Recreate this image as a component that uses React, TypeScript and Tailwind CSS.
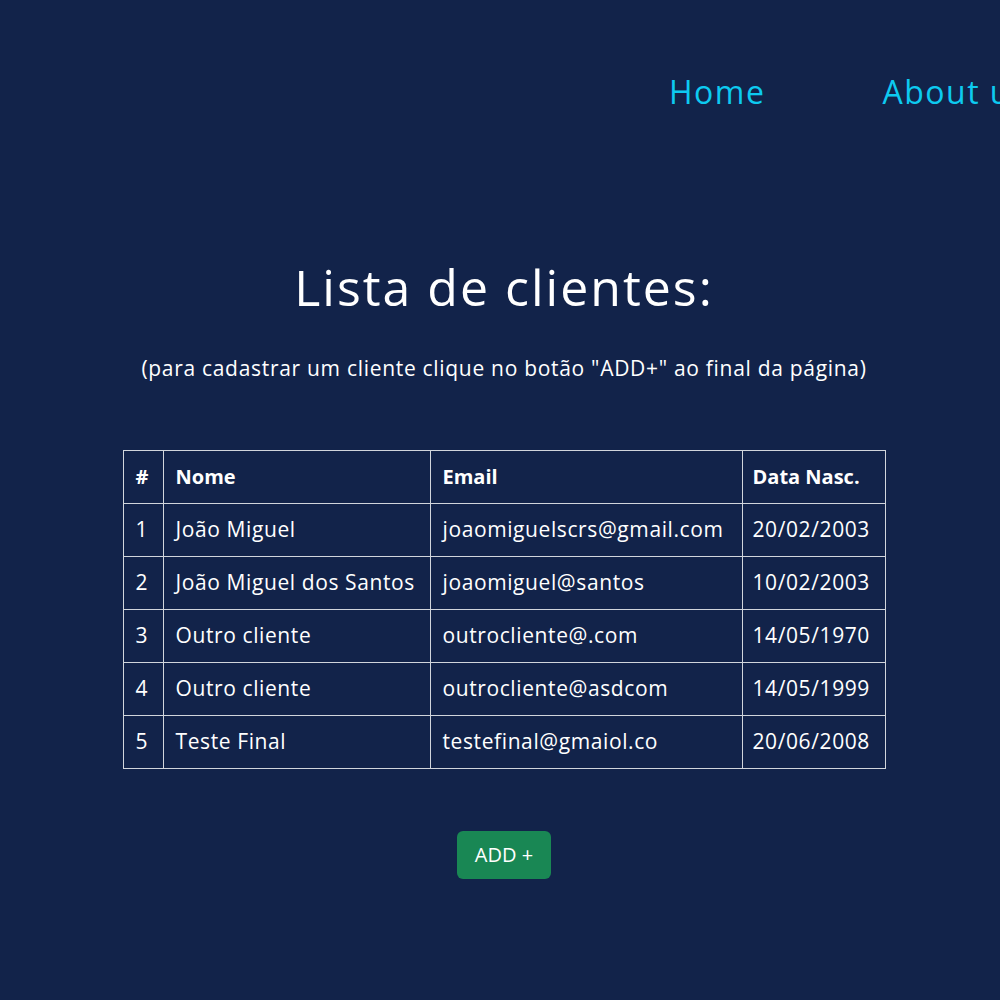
import React from "react";

type Cliente = {
  id: number;
  nome: string;
  email: string;
  nasc: string;
};

const clientes: Cliente[] = [
  { id: 1, nome: "João Miguel", email: "joaomiguelscrs@gmail.com", nasc: "20/02/2003" },
  { id: 2, nome: "João Miguel dos Santos", email: "joaomiguel@santos", nasc: "10/02/2003" },
  { id: 3, nome: "Outro cliente", email: "outrocliente@.com", nasc: "14/05/1970" },
  { id: 4, nome: "Outro cliente", email: "outrocliente@asdcom", nasc: "14/05/1999" },
  { id: 5, nome: "Teste Final", email: "testefinal@gmaiol.co", nasc: "20/06/2008" },
];

const App: React.FC = () => {
  return (
    <div className="min-h-[1000px] w-full overflow-hidden bg-[#12234a] font-['Open_Sans',sans-serif] text-white">
      {/* Navbar */}
      <nav className="flex gap-[117px] whitespace-nowrap pl-[669px] pt-[68px] text-[32px] leading-[48px] tracking-[1.5px] text-[#0dcaf0]">
        <a href="#">Home</a>
        <a href="#">About us</a>
      </nav>

      <main className="flex flex-col items-center pl-2">
        <h1 className="mt-[142px] text-[50px] leading-[58px] tracking-[2px]">Lista de clientes:</h1>
        <p className="mt-[37px] text-[21px] leading-[30px] tracking-[0.7px]">
          (para cadastrar um cliente clique no botão "ADD+" ao final da página)
        </p>

        {/* Tabela */}
        <table className="mt-[67px] w-[762px] table-fixed border-collapse text-[21px] tracking-[0.6px]">
          <thead>
            <tr className="h-[53px] text-[20px] tracking-normal">
              <th className="w-[40px] border border-gray-300 px-3 text-left font-bold whitespace-nowrap">#</th>
              <th className="w-[267px] border border-gray-300 px-3 text-left font-bold whitespace-nowrap">Nome</th>
              <th className="w-[312px] border border-gray-300 px-3 text-left font-bold whitespace-nowrap">Email</th>
              <th className="w-[143px] border border-gray-300 px-[10px] text-left font-bold whitespace-nowrap">Data Nasc.</th>
            </tr>
          </thead>
          <tbody>
            {clientes.map((c) => (
              <tr key={c.id} className="h-[53px]">
                <td className="border border-gray-300 px-3">{c.id}</td>
                <td className="border border-gray-300 px-3 whitespace-nowrap">{c.nome}</td>
                <td className="border border-gray-300 px-3 whitespace-nowrap">{c.email}</td>
                <td className="border border-gray-300 px-[10px] whitespace-nowrap">{c.nasc}</td>
              </tr>
            ))}
          </tbody>
        </table>

        <button className="mt-[62px] h-[48px] rounded-md bg-[#198754] px-[18px] text-[20px] text-white">
          ADD +
        </button>
      </main>
    </div>
  );
};

export default App;
